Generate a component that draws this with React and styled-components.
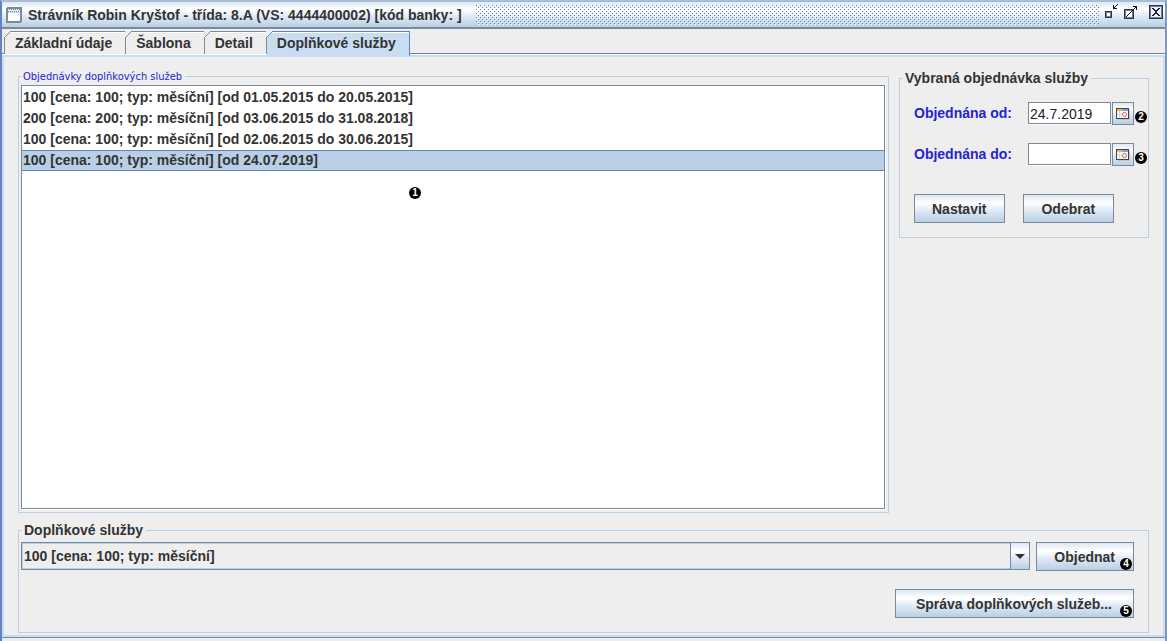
import React, { useState } from "react";
import styled, { createGlobalStyle, css } from "styled-components";

const color = {
  panel: "#eeeeee",
  text: "#333333",
  label: "#2424d2",
  edge: "#7a8a99",
  frame: "#6382bf",
  soft: "#b8cfe5",
  tab: "#c8ddf2",
};

const steel = "linear-gradient(#dde8f3 0%, #ffffff 30%, #dde8f3 60%, #b8cfe5 100%)";

const GlobalStyle = createGlobalStyle`
  *, *::before, *::after { box-sizing: border-box; }
  body {
    margin: 0;
    background: ${color.panel};
    color: ${color.text};
    font: bold 14px/20px "Liberation Sans", Arial, sans-serif;
  }
  button, input, select { font: inherit; color: inherit; margin: 0; border-radius: 0; }
`;

const Window = styled.div`
  display: flex;
  flex-direction: column;
  min-height: 100vh;
  padding-bottom: 4px;
  border-top: 2px solid #a9bcd6;
  border-left: 2px solid ${color.frame};
  border-right: 2px solid #8496b4;
`;

const TitleBar = styled.header`
  display: flex;
  align-items: center;
  gap: 5px;
  height: 27px;
  padding: 0 1px 0 4px;
  background: ${steel};
  border-bottom: 2px solid ${color.edge};
`;

const Title = styled.h1`
  margin: 0;
  padding-right: 9px;
  font: inherit;
  white-space: nowrap;
`;

const Bumps = styled.svg`
  flex: 1;
  min-width: 0;
  height: 20px;
`;

const WindowControls = styled.div`
  display: flex;
  gap: 3px;
`;

const WindowButton = styled.button`
  display: flex;
  width: 16px;
  height: 21px;
  padding: 0;
  border: 0;
  background: none;

  &:last-child {
    margin-left: 6px;
  }
`;

const TabBar = styled.div`
  display: flex;
  height: 25px;
  margin-bottom: 1px;
  padding: 2px 0 0 2px;
  border-bottom: 1px solid ${color.frame};
  box-shadow: 0 1px #ffffff;
`;

const Tab = styled.button`
  position: relative;
  height: 23px;
  padding: 0 13px 0 10px;
  border: 1px solid ${color.edge};
  border-width: 1px 1px 0 0;
  background: ${color.panel};
  box-shadow: inset 0 1px #ffffff;
  line-height: 22px;
  white-space: nowrap;

  &:first-child {
    border-left-width: 1px;
  }

  &::before {
    content: "";
    position: absolute;
    top: -1px;
    left: -1px;
    width: 7px;
    height: 7px;
    background: linear-gradient(135deg, ${color.panel} 45%, ${color.edge} 45%, ${color.edge} 57%, transparent 57%);
  }

  ${(p) =>
    p.$active &&
    css`
      height: 25px;
      padding-bottom: 2px;
      background: ${color.tab};
      border-color: ${color.frame};
    `}
`;

const TabPage = styled.main`
  flex: 1;
  display: flex;
  flex-direction: column;
  gap: 6px;
  padding: 11px 14px 2px 14px;
  border: 2px solid ${color.tab};
  box-shadow: 0 1px ${color.edge};
`;

const Columns = styled.div`
  flex: 1;
  display: grid;
  grid-template-columns: minmax(0, 1fr) 250px;
  align-items: start;
  gap: 10px;
`;

const Group = styled.fieldset`
  min-width: 0;
  margin: 0;
  padding: 0 3px 3px 2px;
  border: 1px solid ${color.soft};
`;

const GroupTitle = styled.legend`
  margin-left: 1px;
  padding: 0 3px 0 2px;
  line-height: 23px;
`;

const OrdersGroup = styled(Group)`
  align-self: stretch;
  display: flex;
`;

const SmallGroupTitle = styled(GroupTitle)`
  margin-left: 0;
  color: ${color.label};
  font: 11px/17px "DejaVu Sans Condensed", "Noto Sans", sans-serif;
`;

const DetailGroup = styled(Group)`
  margin-top: 2px;
  padding: 15px 0 14px 14px;

  ${GroupTitle} {
    margin-left: -11px;
    line-height: 17px;
  }
`;

const OrderList = styled.ul`
  position: relative;
  flex: 1;
  margin: 0;
  padding: 1px 0;
  list-style: none;
  background: #ffffff;
  border: 1px solid ${color.edge};
  box-shadow: 1px 1px #ffffff;
`;

const Order = styled.li`
  height: 21px;
  padding: 0 1px;
  border: 1px solid transparent;
  border-width: 1px 0;
  line-height: 19px;

  ${(p) =>
    p.$selected &&
    css`
      background: ${color.soft};
      border-color: ${color.frame};
    `}
`;

const Marker = styled.span`
  display: block;
  width: 12px;
  height: 12px;
  border-radius: 6px;
  background: #000000;
  color: #ffffff;
  font: bold 10px/12px "Liberation Sans", Arial, sans-serif;
  text-align: center;
`;

const ListMarker = styled(Marker)`
  position: absolute;
  top: 101px;
  left: 387px;
`;

const CornerMarker = styled(Marker)`
  position: absolute;
  right: 1px;
  bottom: 0;
`;

const DateRow = styled.div`
  display: flex;
  height: 23px;
  margin-bottom: 18px;

  ${Marker} {
    align-self: flex-end;
    margin: 0 0 2px 1px;
  }
`;

const DateLabel = styled.label`
  width: 114px;
  padding-top: 1px;
  color: ${color.label};
`;

const DateInput = styled.input`
  width: 83px;
  height: 22px;
  margin-right: 1px;
  padding: 2px 1px 0;
  border: 1px solid ${color.edge};
  background: #ffffff;
  box-shadow: 0 1px #ffffff;
  color: #222222;
  font-weight: normal;
  outline: none;
`;

const Button = styled.button`
  position: relative;
  height: 29px;
  padding: 2px ${(p) => (p.$wide ? "21px 0 20px" : "18px 0 17px")};
  border: 1px solid ${color.edge};
  background: ${steel};
  line-height: 25px;
  white-space: nowrap;
`;

const CalendarButton = styled(Button)`
  display: flex;
  align-items: center;
  justify-content: center;
  width: 22px;
  height: 23px;
  padding: 0;
`;

const ButtonRow = styled.div`
  display: flex;
  gap: 18px;
  padding-top: 10px;
`;

const ServicesGroup = styled(Group)`
  display: flex;
  flex-direction: column;
  align-items: flex-end;
  gap: 18px;
  padding: 0 14px 14px 2px;
`;

const OrderRow = styled.div`
  align-self: stretch;
  display: flex;
  gap: 6px;
`;

const Combo = styled.div`
  position: relative;
  flex: 1;
  min-width: 0;
  height: 28px;
`;

const Select = styled.select`
  appearance: none;
  width: 100%;
  height: 28px;
  padding: 0 24px 0 2px;
  border: 1px solid ${color.edge};
  background: ${color.panel};
  box-shadow: inset 0 0 0 1px ${color.soft};
  outline: none;
`;

const ComboArrow = styled.span`
  position: absolute;
  top: 0;
  right: 0;
  display: flex;
  align-items: center;
  justify-content: center;
  width: 20px;
  height: 28px;
  border: 1px solid ${color.edge};
  background: ${steel};
  pointer-events: none;
`;

const FrameIcon = () => (
  <svg width="17" height="16" shapeRendering="crispEdges" aria-hidden="true">
    <rect x="1" y="1" width="14" height="14" rx="1" fill="#fff" stroke="#7a8a99" strokeWidth="2" />
    <path d="M2 2h12v3H2z" fill="#e4edfa" />
    <path d="M3 2.5h11M2 4.5h12" stroke="#6382bf" strokeDasharray="1 1" />
    <path d="M2 5.5h12" stroke="#c3d0e6" />
  </svg>
);

const MinimizeIcon = () => (
  <svg width="16" height="21" shapeRendering="crispEdges" aria-hidden="true">
    <rect x="1.5" y="7.5" width="6" height="6" fill="#fff" stroke="#333" />
    <rect x="2.5" y="8.5" width="4" height="4" fill="#fff" stroke="#6382bf" />
    <path d="M9 1h1v2h1V2h1V1h1V0h1v1h-1v1h-1v1h-1v1h2v1H9z" fill="#111" />
  </svg>
);

const MaximizeIcon = () => (
  <svg width="16" height="21" shapeRendering="crispEdges" aria-hidden="true">
    <rect x="1.5" y="5.5" width="9" height="9" fill="#fff" stroke="#333" />
    <rect x="2.5" y="6.5" width="7" height="7" fill="none" stroke="#6382bf" />
    <path d="M3 12h1v-1h1v-1h1V9h1V8h1V7h1V6h1V5h1V4h1V3h-2V2h4v4h-1V4h-1v1h-1v1h-1v1H9v1H8v1H7v1H6v1H5v1H4v1H3z" fill="#111" />
  </svg>
);

const CloseIcon = () => (
  <svg width="16" height="21" shapeRendering="crispEdges" aria-hidden="true">
    <rect x="1.5" y="1.5" width="13" height="13" fill="#e8f0f8" stroke="#333" />
    <rect x="2.5" y="2.5" width="11" height="11" fill="none" stroke="#6382bf" />
    <path d="M4 4h2v1h1v1h2V5h1V4h2v1h-1v1h-1v1H9v2h1v1h1v1h1v1h-2v-1H9v-1H7v1H6v1H4v-1h1v-1h1V9h1V7H6V6H5V5H4z" fill="#222" />
  </svg>
);

const CalendarIcon = () => (
  <svg width="14" height="12" shapeRendering="crispEdges" aria-hidden="true">
    <path d="M2 2h12v10H2z" fill="#c3c3c3" />
    <rect x=".5" y=".5" width="12" height="10" fill="#f6f6f6" stroke="#444" />
    <path d="M1 1h5v2H1z" fill="#f0b64c" />
    <path d="M6 1h6v2H6z" fill="#7f9fd6" />
    <path d="M3.5 3v7M1 6.5h5" stroke="#dcdcdc" />
    <circle cx="8.5" cy="6.5" r="2" fill="#fff" stroke="#e0584f" shapeRendering="auto" />
  </svg>
);

const tabs = ["Základní údaje", "Šablona", "Detail", "Doplňkové služby"];

const orders = [
  "100 [cena: 100; typ: měsíční] [od 01.05.2015 do 20.05.2015]",
  "200 [cena: 200; typ: měsíční] [od 03.06.2015 do 31.08.2018]",
  "100 [cena: 100; typ: měsíční] [od 02.06.2015 do 30.06.2015]",
  "100 [cena: 100; typ: měsíční] [od 24.07.2019]",
];

const DateField = ({ id, label, initial, marker }) => {
  const [value, setValue] = useState(initial);
  return (
    <DateRow>
      <DateLabel htmlFor={id}>{label}</DateLabel>
      <DateInput id={id} type="text" value={value} onChange={(e) => setValue(e.target.value)} />
      <CalendarButton type="button" aria-label="Kalendář">
        <CalendarIcon />
      </CalendarButton>
      <Marker>{marker}</Marker>
    </DateRow>
  );
};

export default function App() {
  const [activeTab, setActiveTab] = useState(3);
  const [selected, setSelected] = useState(3);

  return (
    <>
      <GlobalStyle />
      <Window>
        <TitleBar>
          <FrameIcon />
          <Title>Strávník Robin Kryštof - třída: 8.A (VS: 4444400002) [kód banky: ]</Title>
          <Bumps aria-hidden="true" shapeRendering="crispEdges">
            <defs>
              <pattern id="bumps" width="4" height="4" patternUnits="userSpaceOnUse">
                <path d="M0 0h1v1H0zM2 2h1v1H2z" fill="#6382bf" />
                <path d="M1 1h1v1H1zM3 3h1v1H3z" fill="#ffffff" />
              </pattern>
            </defs>
            <rect width="100%" height="20" fill="url(#bumps)" />
          </Bumps>
          <WindowControls>
            <WindowButton type="button" aria-label="Minimalizovat"><MinimizeIcon /></WindowButton>
            <WindowButton type="button" aria-label="Maximalizovat"><MaximizeIcon /></WindowButton>
            <WindowButton type="button" aria-label="Zavřít"><CloseIcon /></WindowButton>
          </WindowControls>
        </TitleBar>

        <TabBar role="tablist">
          {tabs.map((name, i) => (
            <Tab
              key={name}
              type="button"
              role="tab"
              aria-selected={i === activeTab}
              $active={i === activeTab}
              onClick={() => setActiveTab(i)}
            >
              {name}
            </Tab>
          ))}
        </TabBar>

        <TabPage>
          <Columns>
            <OrdersGroup>
              <SmallGroupTitle>Objednávky doplňkových služeb</SmallGroupTitle>
              <OrderList role="listbox" aria-label="Objednávky doplňkových služeb">
                {orders.map((order, i) => (
                  <Order
                    key={order}
                    role="option"
                    aria-selected={i === selected}
                    $selected={i === selected}
                    onClick={() => setSelected(i)}
                  >
                    {order}
                  </Order>
                ))}
                <ListMarker as="li" role="presentation">1</ListMarker>
              </OrderList>
            </OrdersGroup>

            <DetailGroup>
              <GroupTitle>Vybraná objednávka služby</GroupTitle>
              <DateField id="from" label="Objednána od:" initial="24.7.2019" marker="2" />
              <DateField id="to" label="Objednána do:" initial="" marker="3" />
              <ButtonRow>
                <Button type="button">Nastavit</Button>
                <Button type="button">Odebrat</Button>
              </ButtonRow>
            </DetailGroup>
          </Columns>

          <ServicesGroup>
            <GroupTitle>Doplňkové služby</GroupTitle>
            <OrderRow>
              <Combo>
                <Select aria-label="Doplňkové služby">
                  <option>100 [cena: 100; typ: měsíční]</option>
                </Select>
                <ComboArrow>
                  <svg width="10" height="5" aria-hidden="true">
                    <path d="M0 0h10L5 5z" fill="#333" />
                  </svg>
                </ComboArrow>
              </Combo>
              <Button type="button">
                Objednat<CornerMarker>4</CornerMarker>
              </Button>
            </OrderRow>
            <Button type="button" $wide>
              Správa doplňkových služeb...<CornerMarker>5</CornerMarker>
            </Button>
          </ServicesGroup>
        </TabPage>
      </Window>
    </>
  );
}
